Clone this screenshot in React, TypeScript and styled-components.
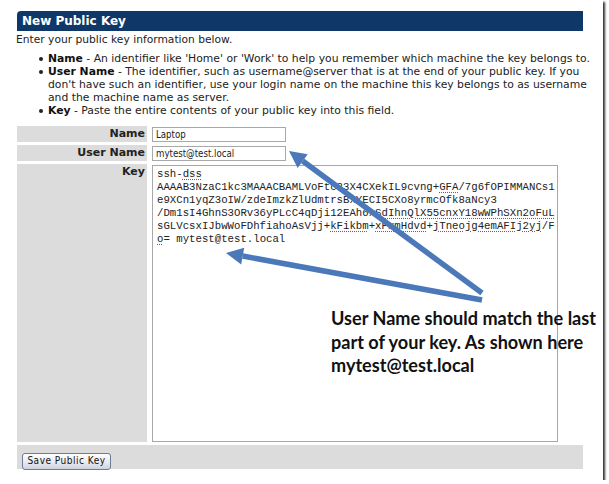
import React from "react";
import styled, { createGlobalStyle } from "styled-components";

const Global = createGlobalStyle`
  html, body { margin: 0; padding: 0; background: #fff; }
  body { font-family: Tahoma, "DejaVu Sans", Verdana, sans-serif; }
`;

const Frame = styled.div`
  position: relative;
  width: 603px;
  height: 480px;
  box-sizing: border-box;
  background: #fff;
  box-shadow: 2px 2px 2px rgba(0, 0, 0, 0.8);
  padding: 11px 0 0 16px;
  overflow: hidden;
`;

const Header = styled.div`
  margin-left: 1px;
  width: 566px;
  height: 20px;
  box-sizing: border-box;
  background: #0f3767;
  border-top-left-radius: 4px;
  color: #fff;
  font-weight: bold;
  font-size: 12px;
  line-height: 20px;
  padding-left: 5px;
`;

const Intro = styled.div`
  font-size: 10.7px;
  color: #222;
  line-height: 13px;
  margin-top: 2px;
`;

const List = styled.ul`
  margin: 6px 0 0 0;
  padding: 0 0 0 32px;
  width: 548px;
  font-size: 10.8px;
  line-height: 13px;
  color: #222;
  list-style: none;
`;

const Item = styled.li`
  position: relative;
  &::before {
    content: "";
    position: absolute;
    left: -9px;
    top: 5px;
    width: 4px;
    height: 4px;
    border-radius: 50%;
    background: #222;
  }
`;

const Term = styled.b`
  font-weight: bold;
  color: #111;
`;

const Form = styled.div`
  margin: 9px 0 0 1px;
  width: 566px;
  display: grid;
  grid-template-columns: 130px 1fr;
  grid-template-rows: 16px 16px 278px;
  column-gap: 3px;
  row-gap: 3px;
`;

const Label = styled.div`
  background: #dcdcdc;
  text-align: right;
  font-weight: bold;
  font-size: 11px;
  color: #222;
  line-height: 16px;
  padding-right: 2px;
`;

const Field = styled.div`
  padding: 1px 0 0 2px;
`;

const Input = styled.div`
  width: 134px;
  height: 15px;
  box-sizing: border-box;
  border: 1px solid #a8a8a8;
  font-family: "DejaVu Sans Condensed", "DejaVu Sans", sans-serif;
  font-size: 9.6px;
  line-height: 13px;
  padding-left: 3px;
  color: #222;
  background: #fff;
`;

const KeyBox = styled.div`
  width: 406px;
  height: 277px;
  box-sizing: border-box;
  border: 1px solid #a8a8a8;
  font-family: "Liberation Mono", "Courier New", monospace;
  font-size: 10.7px;
  line-height: 13px;
  padding: 2px 0 0 4px;
  color: #222;
  white-space: pre;
  overflow: hidden;
  background: #fff;
`;

const Spell = styled.span`
  text-decoration: underline dotted #d33;
  text-underline-offset: 2px;
`;

const Footer = styled.div`
  margin: 3px 0 0 1px;
  width: 566px;
  height: 24px;
  box-sizing: border-box;
  background: #dcdcdc;
  padding: 4px 0 0 5px;
`;

const Button = styled.button`
  width: 89px;
  height: 17px;
  box-sizing: border-box;
  border: 1px solid #6d7d95;
  border-radius: 3px;
  background: linear-gradient(#ffffff, #e6e8ee 60%, #cfd3dc);
  font-family: "DejaVu Sans Condensed", "DejaVu Sans", sans-serif;
  font-size: 10px;
  letter-spacing: 0.5px;
  color: #111;
  padding: 0;
  line-height: 14px;
`;

const Overlay = styled.svg`
  position: absolute;
  left: 0;
  top: 0;
  pointer-events: none;
`;

const Note = styled.div`
  position: absolute;
  left: 331px;
  top: 307px;
  font-family: Lato, "Open Sans", sans-serif;
  font-weight: bold;
  font-size: 18.1px;
  line-height: 23.5px;
  color: #111;
  white-space: pre;
`;

function Arrow({ x1, y1, x2, y2 }: { x1: number; y1: number; x2: number; y2: number }) {
  const dx = x2 - x1;
  const dy = y2 - y1;
  const len = Math.hypot(dx, dy);
  const ux = dx / len;
  const uy = dy / len;
  const hl = 17;
  const hw = 8.5;
  const bx = x2 - ux * hl;
  const by = y2 - uy * hl;
  const px = -uy;
  const py = ux;
  return (
    <g>
      <line x1={x1} y1={y1} x2={bx} y2={by} stroke="#4a78b8" strokeWidth={5.5} />
      <polygon
        points={`${x2},${y2} ${bx + px * hw},${by + py * hw} ${bx - px * hw},${by - py * hw}`}
        fill="#4a78b8"
      />
    </g>
  );
}

export default function App() {
  return (
    <>
      <Global />
      <Frame>
        <Header>New Public Key</Header>
        <Intro>Enter your public key information below.</Intro>
        <List>
          <Item>
            <Term>Name</Term> - An identifier like 'Home' or 'Work' to help you remember which machine the key belongs to.
          </Item>
          <Item>
            <Term>User Name</Term> - The identifier, such as username@server that is at the end of your public key. If you
            don't have such an identifier, use your login name on the machine this key belongs to as username and the
            machine name as server.
          </Item>
          <Item>
            <Term>Key</Term> - Paste the entire contents of your public key into this field.
          </Item>
        </List>
        <Form>
          <Label>Name</Label>
          <Field>
            <Input>Laptop</Input>
          </Field>
          <Label>User Name</Label>
          <Field>
            <Input>mytest@test.local</Input>
          </Field>
          <Label>Key</Label>
          <Field>
            <KeyBox>
              {"ssh-"}<Spell>dss</Spell>{"\n"}
              {"AAAAB3NzaC1kc3MAAACBAMLVoFtc83X4CXekIL9cvng+"}<Spell>GFA</Spell>{"/7g6fOPIMMANCs1\n"}
              {"e9XCn1yqZ3oIW/zdeImzkZlUdmtrsBxYECI5CXo8yrmcOfk8aNcy3\n"}
              {"/Dm1sI4GhnS3ORv36yPLcC4qDji12EAh6xS"}<Spell>dIhnQlX55cnxY18wWPhSXn2oFuL</Spell>{"\n"}
              {"sGLVcsxIJbwWoFDhfiahoAsVjj+"}<Spell>kFikbm</Spell>{"+"}<Spell>xPxmHdvd</Spell>{"+"}<Spell>jTneojg4emAFIj2yj</Spell>{"/F\n"}
              <Spell>o</Spell>{"= mytest@test.local"}
            </KeyBox>
          </Field>
        </Form>
        <Footer>
          <Button>Save Public Key</Button>
        </Footer>
        <Overlay width={603} height={480}>
          <Arrow x1={482} y1={293} x2={289} y2={151} />
          <Arrow x1={482} y1={300} x2={226} y2={253} />
        </Overlay>
        <Note>{"User Name should match the last\npart of your key. As shown here\nmytest@test.local"}</Note>
      </Frame>
    </>
  );
}
